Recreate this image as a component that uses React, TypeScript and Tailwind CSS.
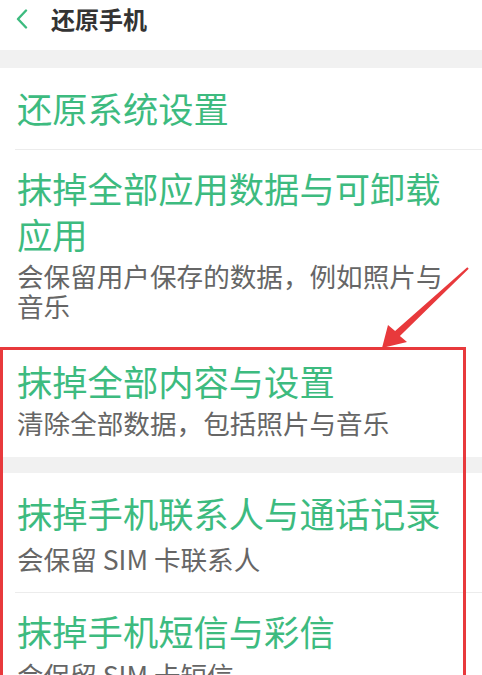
import React from "react";

const green = "text-[#3dbb7f]";

function Title({ children }: { children: React.ReactNode }) {
  return <div className={`text-[35.3px] leading-[46px] ${green}`}>{children}</div>;
}
function Sub({ children, mt = "mt-[5px]" }: { children: React.ReactNode; mt?: string }) {
  return <div className={`text-[26.6px] leading-[30px] text-[#666666] ${mt}`}>{children}</div>;
}

export default function App() {
  return (
    <div className="relative w-[482px] h-[675px] overflow-hidden bg-white font-['Noto_Sans_CJK_SC','Noto_Sans',sans-serif]">
      {/* header */}
      <div className="h-[50px] flex items-start">
        <div className="h-[38px] flex items-center pl-[15px] gap-[22px]">
          <svg width="14" height="20" viewBox="0 0 14 20" className="block">
            <polyline points="11,1.5 3,10 11,18.5" fill="none" stroke="#3dbb7f" strokeWidth="2.4" strokeLinecap="round" strokeLinejoin="round" />
          </svg>
          <div className="text-[24px] leading-[38px] font-bold text-[#333333]">还原手机</div>
        </div>
      </div>
      <div className="h-[18px] bg-[#f1f1f1]" />

      <div className="pl-[17px] pr-[28px] pt-[17px] pb-[18px]">
        <Title>还原系统设置</Title>
      </div>
      <div className="ml-[15px] h-px bg-[#ececec]" />

      <div className="pl-[17px] pr-[28px] pt-[15px] pb-[37px]">
        <Title>抹掉全部应用数据与可卸载应用</Title>
        <Sub mt="mt-[4px]">会保留用户保存的数据，例如照片与音乐</Sub>
      </div>

      <div className="pl-[17px] pr-[28px] pb-[19px]">
        <Title>抹掉全部内容与设置</Title>
        <Sub mt="mt-[4px]">清除全部数据，包括照片与音乐</Sub>
      </div>
      <div className="h-[16px] bg-[#f1f1f1]" />

      <div className="pl-[17px] pr-[28px] pt-[17px] pb-[18px]">
        <Title>抹掉手机联系人与通话记录</Title>
        <Sub mt="mt-[8px]">会保留 SIM 卡联系人</Sub>
      </div>
      <div className="ml-[15px] h-px bg-[#ececec]" />

      <div className="pl-[17px] pr-[28px] pt-[15px] pb-[16px]">
        <Title>抹掉手机短信与彩信</Title>
        <Sub mt="mt-[6px]">会保留 SIM 卡短信</Sub>
      </div>

      {/* annotation box */}
      <div className="absolute left-0 top-[347px] w-[466px] h-[400px] border-[3px] border-[#e8393c]" />
      {/* annotation arrow */}
      <svg className="absolute left-0 top-0" width="482" height="675" viewBox="0 0 482 675">
        <polygon
          points="467.3,267.3 468.7,268.7 399.9,336.1 407,342 382,348 388,325 395.1,330.9"
          fill="#e8393c"
        />
      </svg>
    </div>
  );
}
